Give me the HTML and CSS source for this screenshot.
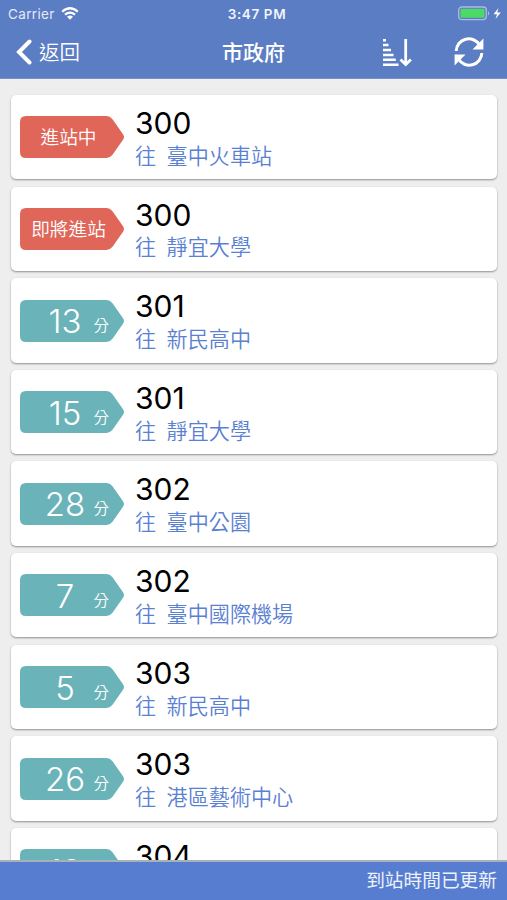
FILE: index.html
```html
<!DOCTYPE html>
<html lang="zh-Hant">
<head>
<meta charset="utf-8">
<title>市政府</title>
<link rel="stylesheet" href="styles.css">
</head>
<body>
<svg width="0" height="0" class="defs">
  <symbol id="tag" viewBox="0 0 104 42"><path d="M6 0H86.500Q90 0 92.500 3.200L102.500 17.500Q105.500 21 102.500 24.500L92.500 38.800Q90 42 86.500 42H6Q0 42 0 36V6Q0 0 6 0Z" fill="currentColor"/></symbol>
</svg>
<div class="app">
  <header class="header">
    <div class="status">
      <div class="carrier"><span>Carrier</span>
        <svg width="18" height="13" viewBox="0 0 18 13" fill="none" stroke="#fff" stroke-width="2.200"><path d="M1.200 4.700Q9-2.200 16.800 4.700M4 7.700Q9 3.500 14 7.700"/><path d="M6 9.700Q9 7.400 12 9.700L9 12.700Z" fill="#fff" stroke="none"/></svg>
      </div>
      <div class="clock">3:47 PM</div>
      <div class="power">
        <svg width="44" height="15" viewBox="0 0 44 15"><rect x=".7" y="1" width="27.600" height="12.600" rx="3" fill="none" stroke="#a9bce4" stroke-width="1.300"/><rect x="2.500" y="2.800" width="24" height="9" rx="1.200" fill="#4cd964"/><path d="M30 5Q32.500 7.300 30 9.600Z" fill="#a9bce4"/><path d="M40.500 2L35.500 8.200H39L37.500 13L42.800 6.500H39.200Z" fill="#fff"/></svg>
      </div>
    </div>
    <nav class="nav">
      <div class="back">
        <svg width="16" height="26" viewBox="0 0 16 26"><path d="M13.500 2.500L3 13L13.500 23.500" fill="none" stroke="#fff" stroke-width="4" stroke-linecap="round" stroke-linejoin="miter"/></svg>
        <span>返回</span>
      </div>
      <h1 class="title">市政府</h1>
      <div class="actions">
        <svg width="29" height="29" viewBox="0 0 29 29" fill="#fff"><path d="M0 1H3V3.500H0ZM0 5.800H5.500V8.300H0ZM0 10.800H8V13.300H0ZM0 15.700H10.500V18.200H0ZM0 20.600H12.800V23.100H0ZM0 25.500H15.500V28H0Z"/><path d="M22.700 1V26M17.500 21.500L22.700 26.500L27.900 21.500" fill="none" stroke="#fff" stroke-width="2.800"/></svg>
        <svg width="30" height="30" viewBox="0 0 30 30"><path d="M2.200 14A12.500 12.500 0 0 1 25.500 8M27.800 16A12.500 12.500 0 0 1 4.500 22" fill="none" stroke="#fff" stroke-width="3"/><path d="M29.400 1.500V12.500H18.500ZM.6 28.500V17.500H11.500Z" fill="#fff"/></svg>
      </div>
    </nav>
  </header>
  <main class="list">
    <article class="card"><div class="tag soon"><svg><use href="#tag"/></svg><span class="state">進站中</span></div><div class="route"><b>300</b><p><span>往</span><span>臺中火車站</span></p></div></article>
    <article class="card"><div class="tag soon"><svg><use href="#tag"/></svg><span class="state">即將進站</span></div><div class="route"><b>300</b><p><span>往</span><span>靜宜大學</span></p></div></article>
    <article class="card"><div class="tag"><svg><use href="#tag"/></svg><span class="num">13</span><span class="unit">分</span></div><div class="route"><b>301</b><p><span>往</span><span>新民高中</span></p></div></article>
    <article class="card"><div class="tag"><svg><use href="#tag"/></svg><span class="num">15</span><span class="unit">分</span></div><div class="route"><b>301</b><p><span>往</span><span>靜宜大學</span></p></div></article>
    <article class="card"><div class="tag"><svg><use href="#tag"/></svg><span class="num">28</span><span class="unit">分</span></div><div class="route"><b>302</b><p><span>往</span><span>臺中公園</span></p></div></article>
    <article class="card"><div class="tag"><svg><use href="#tag"/></svg><span class="num">7</span><span class="unit">分</span></div><div class="route"><b>302</b><p><span>往</span><span>臺中國際機場</span></p></div></article>
    <article class="card"><div class="tag"><svg><use href="#tag"/></svg><span class="num">5</span><span class="unit">分</span></div><div class="route"><b>303</b><p><span>往</span><span>新民高中</span></p></div></article>
    <article class="card"><div class="tag"><svg><use href="#tag"/></svg><span class="num">26</span><span class="unit">分</span></div><div class="route"><b>303</b><p><span>往</span><span>港區藝術中心</span></p></div></article>
    <article class="card"><div class="tag"><svg><use href="#tag"/></svg><span class="num">18</span></div><div class="route"><b>304</b></div></article>
  </main>
  <footer class="footer">到站時間已更新</footer>
</div>
</body>
</html>
```
FILE: styles.css
```css
* { box-sizing: border-box; }
body { margin: 0; font-family: Inter, "Noto Sans CJK TC", sans-serif; }
.defs { position: absolute; }
.app { display: flex; flex-direction: column; height: 900px; overflow: hidden; background: #eee; }
.header { flex: none; height: 79px; background: #5b7dc4; color: #fff; border-bottom: 1px solid #7891cb; }
.status { display: grid; grid-template-columns: 1fr auto 1fr; align-items: center; height: 28px; padding: 0 5px 0 8px; font-size: 13.5px; }
.carrier { display: flex; align-items: center; gap: 6px; color: #e4eaf7; letter-spacing: .35px; }
.carrier svg { margin-top: -2px; }
.clock { font-weight: 600; letter-spacing: .6px; padding-left: 4px; color: #f0f4fc; }
.power { display: flex; justify-content: flex-end; }
.power svg { display: block; margin-top: -2px; }
.nav { display: grid; grid-template-columns: 1fr auto 1fr; align-items: center; height: 48px; padding: 0 23px 0 16px; }
.back { display: flex; align-items: center; gap: 7px; font-size: 20.5px; line-height: 30px; font-weight: 350; }
.back span { padding-top: 2px; }
.title { margin: 0; padding: 2px 0 0 7px; font-size: 21px; line-height: 30px; font-weight: 500; }
.actions { display: flex; justify-content: flex-end; align-items: center; gap: 42px; }
.list { flex: 1; min-height: 0; overflow: hidden; padding: 15.900px 10px 0 11px; display: flex; flex-direction: column; gap: 7.300px; }
.card { flex: none; height: 84.350px; display: flex; background: #fff; border-radius: 5px; box-shadow: 0 1px 2px rgba(0,0,0,.4); padding-left: 9px; }
.tag { display: grid; grid-template-columns: 104px; grid-template-rows: 42px; width: 104px; height: 42px; margin-top: 21.400px; color: #6ab3b9; }
.tag > * { grid-area: 1 / 1; }
.tag svg { width: 104px; height: 42px; }
.tag span { color: #fff; z-index: 1; }
.soon { color: #df6659; }
.tag .state { font-size: 18.700px; font-weight: 350; line-height: 42px; text-align: center; padding: 1px 7px 0 0; }
.num { font-size: 33px; font-weight: 300; line-height: 42px; text-align: center; padding: .5px 14px 0 0; }
.unit { font-size: 15.500px; font-weight: 350; line-height: 24px; padding: 14.500px 0 0 73.500px; }
.route { padding: 10px 0 0 11px; }
.route b { display: block; font-weight: 400; font-size: 30px; line-height: 36px; color: #000; }
.route p { display: flex; gap: 10.500px; margin: 0; padding-top: .8px; font-size: 21.100px; line-height: 30px; font-weight: 350; color: #5a80d2; }
.footer { flex: none; height: 40px; background: #567dcf; border-top: 2px solid #a9b1b8; color: #edf2fc; text-align: right; font-size: 18.700px; line-height: 38px; padding-right: 10px; }
```
